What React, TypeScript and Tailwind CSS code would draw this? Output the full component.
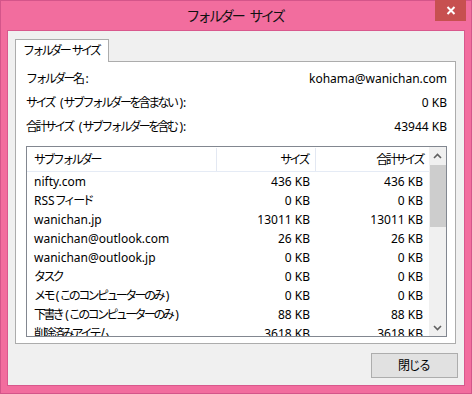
import React from "react";

type Row = {
  name: string;
  size: string;
  total: string;
};

const rows: Row[] = [
  { name: "nifty.com", size: "436 KB", total: "436 KB" },
  { name: "RSS フィード", size: "0 KB", total: "0 KB" },
  { name: "wanichan.jp", size: "13011 KB", total: "13011 KB" },
  { name: "wanichan@outlook.com", size: "26 KB", total: "26 KB" },
  { name: "wanichan@outlook.jp", size: "0 KB", total: "0 KB" },
  { name: "タスク", size: "0 KB", total: "0 KB" },
  { name: "メモ (このコンピューターのみ)", size: "0 KB", total: "0 KB" },
  { name: "下書き (このコンピューターのみ)", size: "88 KB", total: "88 KB" },
  { name: "削除済みアイテム", size: "3618 KB", total: "3618 KB" },
  { name: "送信済みアイテム", size: "0 KB", total: "0 KB" },
];

const JP = /([\u3000-\u30ff\u3400-\u9fff\uff00-\uffef]+)/;

// Meiryo UI kana are narrow, so squeeze the CJK runs a bit
// (the margin gives back the spacing eaten after the last glyph)
const T = ({
  text,
  cls = "tracking-[-2.6px] mr-[3px]",
}: {
  text: string;
  cls?: string;
}) => (
  <>
    {text.split(JP).map((s, i) =>
      i % 2 === 1 ? (
        <span key={i} className={cls}>
          {s}
        </span>
      ) : (
        s
      ),
    )}
  </>
);

const InfoRow = ({ label, value }: { label: string; value: string }) => (
  <div className="h-[24px] flex items-center justify-between">
    <span className="whitespace-nowrap">
      <T text={label} />
    </span>
    <span>{value}</span>
  </div>
);

const Chevron = ({ up }: { up?: boolean }) => (
  <svg width="9" height="6" viewBox="0 0 9 6">
    <path
      d={up ? "M1 5 L4.5 1.5 L8 5" : "M1 1 L4.5 4.5 L8 1"}
      fill="none"
      stroke="#606060"
      strokeWidth="1.6"
    />
  </svg>
);

export default function App() {
  return (
    <div className="w-[472px] h-[394px] border border-[#d4558a] bg-[#f26d9e] flex flex-col text-black text-[12px] font-['Noto_Sans','Noto_Sans_CJK_JP',sans-serif]">
      {/* title bar */}
      <div className="h-[29px] relative flex items-center justify-center">
        <span className="text-[14px] text-[#111] pb-[1px] whitespace-nowrap">
          <T text="フォルダー サイズ" cls="tracking-[-2.6px] mr-[2.6px]" />
        </span>
        <div className="absolute top-[-1px] right-[5px] w-[31px] h-[21px] bg-[#c75050] flex items-center justify-center">
          <svg width="10" height="9" viewBox="0 0 10 9">
            <path d="M1.5 1 L8.5 8 M8.5 1 L1.5 8" stroke="#fff" strokeWidth="2" />
          </svg>
        </div>
      </div>

      {/* client area */}
      <div className="mx-[6px] mb-[7px] flex-1 border border-[#d9588d] bg-[#f0f0f0] flex flex-col pl-[7px] pr-[8px] pt-[8px] pb-[7px]">
        <div className="flex">
          <div className="h-[23px] -mb-[1px] relative z-10 bg-white border border-b-0 border-[#acacac] pl-[7px] pr-[6px] flex items-center whitespace-nowrap">
            <T text="フォルダー サイズ" cls="tracking-[-2.8px] mr-[2.8px]" />
          </div>
        </div>

        <div className="h-[283px] bg-white border border-[#acacac] flex flex-col pl-[10px] pr-[8px] pt-[5px] pb-[6px]">
          <InfoRow label="フォルダー名:" value="kohama@wanichan.com" />
          <InfoRow label="サイズ (サブフォルダーを含まない):" value="0 KB" />
          <InfoRow label="合計サイズ (サブフォルダーを含む):" value="43944 KB" />

          <div className="mt-[7px] flex-1 border border-[#828790] flex overflow-hidden">
            <div className="flex-1 flex flex-col overflow-hidden">
              <div className="h-[25px] shrink-0 border-b border-[#e5ebf5] grid grid-cols-[190px_99px_113px] pt-[1px]">
                <div className="border-r border-[#e3e8f2] pl-[7px] flex items-center">
                  <T text="サブフォルダー" />
                </div>
                <div className="border-r border-[#e3e8f2] pr-[7px] flex items-center justify-end">
                  <T text="サイズ" cls="tracking-[-2.6px]" />
                </div>
                <div className="pr-[6px] flex items-center justify-end">
                  <T text="合計サイズ" cls="tracking-[-2.6px]" />
                </div>
              </div>
              {rows.map((r) => (
                <div key={r.name} className="h-[19px] shrink-0 grid grid-cols-[190px_99px_113px]">
                  <div className="pl-[7px] flex items-center whitespace-nowrap">
                    <T text={r.name} />
                  </div>
                  <div className="pr-[6px] flex items-center justify-end">{r.size}</div>
                  <div className="pr-[6px] flex items-center justify-end">{r.total}</div>
                </div>
              ))}
            </div>

            {/* scrollbar */}
            <div className="w-[17px] bg-[#f0f0f0] flex flex-col">
              <div className="h-[17px] flex items-center justify-center">
                <Chevron up />
              </div>
              <div className="mt-[1px] ml-[1px] h-[62px] bg-[#cdcdcd]" />
              <div className="flex-1" />
              <div className="h-[17px] flex items-center justify-center">
                <Chevron />
              </div>
            </div>
          </div>
        </div>

        <div className="flex justify-end mt-[9px] -mr-[2px]">
          <button className="w-[87px] h-[25px] bg-[#e1e1e1] border border-[#adadad] flex items-center justify-center">
            <T text="閉じる" cls="tracking-[-1.5px] mr-[1.5px]" />
          </button>
        </div>
      </div>
    </div>
  );
}
